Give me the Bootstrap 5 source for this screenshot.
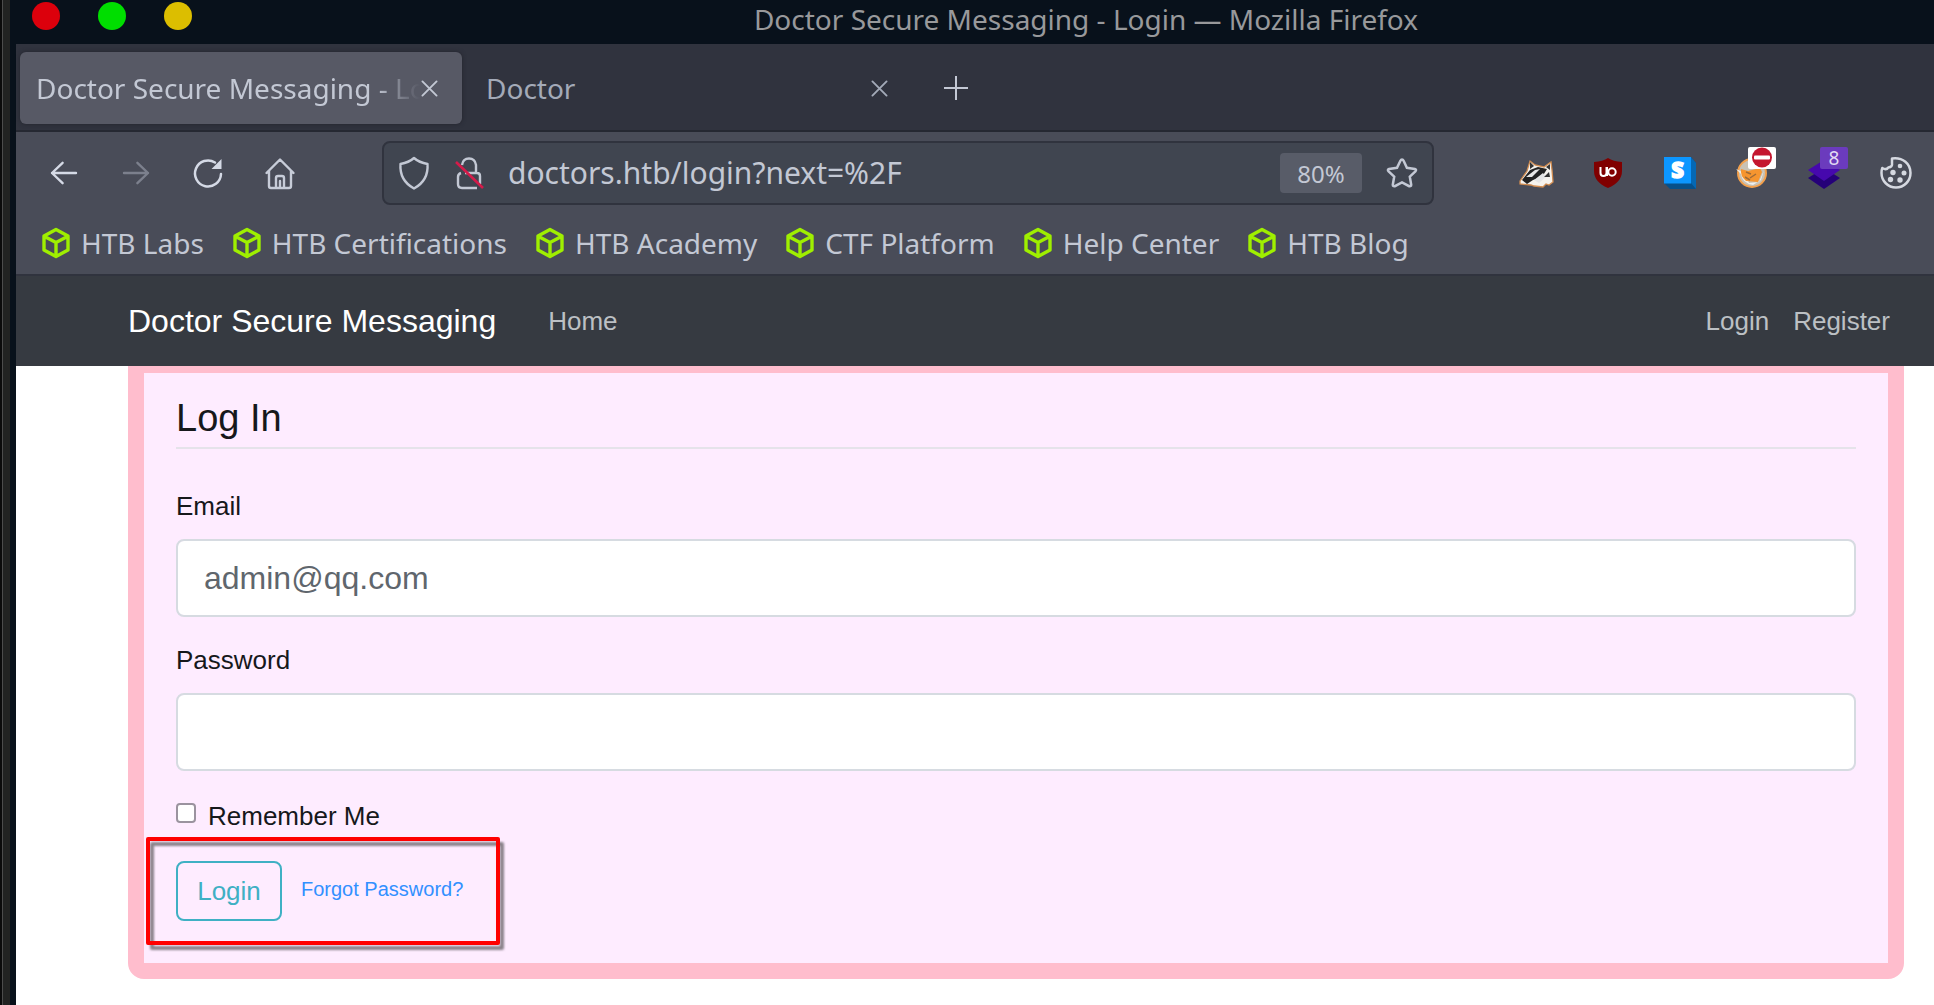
<!DOCTYPE html>
<html lang="en">
<head>
<meta charset="utf-8">
<meta name="viewport" content="width=device-width, initial-scale=1">
<title>Doctor Secure Messaging - Login</title>
<link rel="stylesheet" href="https://cdn.jsdelivr.net/npm/bootstrap@5.3.0/dist/css/bootstrap.min.css">
<style>
  body { font-family: "Liberation Sans", Arial, sans-serif; font-size: 26px; line-height: 38px; color: #16181b; background: #fff; overflow-x: hidden; }
  .desk-edge { width: 16px; flex: none; background: linear-gradient(90deg, #0b0b0b 2px, #4c4c4c 2px 3px, #222322 3px 10px, #08111b 10px); }
  .browser-ui { font-family: "Noto Sans", sans-serif; font-size: 28px; line-height: 38px; color: #c3c8d4; }
  .browser-ui svg { display: block; flex: none; overflow: visible; }
  .browser-ui button { background: none; border: 0; padding: 0; color: inherit; line-height: inherit; }
  .titlebar { height: 44px; background: #08111b; color: #98999b; padding-bottom: 6px; }
  .dots { gap: 38px; padding-left: 16px; margin-top: -6px; }
  .dots button { width: 28px; height: 28px; border-radius: 50%; }
  .dots .d-close { background: #dc000c; }
  .dots .d-min { background: #00de00; }
  .dots .d-max { background: #dcbe00; }
  .win-title { padding-left: 46px; }
  .tabstrip { height: 88px; background: #30333e; border-bottom: 2px solid #252832; padding: 2px 4px 0; }
  .web-tab { width: 442px; height: 72px; border-radius: 6px; padding: 0 24px 0 16px; color: #a3aab8; }
  .web-tab.current { background: #575965; color: #c3c8d4; box-shadow: 0 0 4px #22242d; }
  .web-tab .cap { flex: 1; min-width: 0; overflow: hidden; white-space: nowrap; }
  .web-tab.current .cap { -webkit-mask-image: linear-gradient(90deg, #000 340px, rgba(0,0,0,.35) 365px, transparent 384px); mask-image: linear-gradient(90deg, #000 340px, rgba(0,0,0,.35) 365px, transparent 384px); }
  .toolbar { background: #494c58; height: 82px; }
  .nav-icons { padding-left: 12px; width: 366px; flex: none; }
  .nav-icons button, .exts button { width: 72px; height: 72px; display: flex; align-items: center; justify-content: center; position: relative; }
  .urlbar { height: 64px; background: #404550; border: 2px solid #30333e; border-radius: 8px; padding: 0 14px; gap: 24px; }
  .urlbar input { flex: 1; min-width: 0; border: 0; outline: 0; background: none; color: inherit; padding: 0; margin: 0; font-size: 30px; }
  .zoom-pill { height: 40px; border-radius: 4px; width: 82px; font-size: 24px; }
  .urlbar button.zoom-pill { background: #585c68; padding-top: 2px; }
  .exts { padding-left: 66px; padding-right: 2px; }
  .ext-flag { position: absolute; left: 32px; top: 10px; }
  .bookmarks { background: #494c58; height: 62px; border-bottom: 2px solid #30333e; padding: 0 26px 2px; gap: 29px; }
  .bookmarks a { color: inherit; gap: 11px; white-space: nowrap; }
  .site-nav { background: #363a41; min-height: 90px; padding: 0 44px 0 112px; }
  .site-nav .navbar-brand { font-size: 32px; line-height: 38px; color: #fff; padding: 0; margin-right: 52px; }
  .site-nav .nav-link { color: #bcc0c4; padding: 0; }
  .site-nav .right-links { gap: 24px; }
  .page-body { padding: 0 30px 26px 112px; }
  .login-box { background: #feecff; border: 16px solid #ffbdcd; border-top-width: 7px; border-radius: 0 0 16px 16px; padding: 22px 32px 42px; }
  .login-box legend { font-size: 38px; line-height: 46px; padding-bottom: 6px; border-bottom: 2px solid #e5e3ea; margin-bottom: 38px; }
  .login-box .form-label { display: block; margin-bottom: 14px; }
  .field-row { margin-bottom: 24px; }
  .login-box .form-control { height: 78px; border: 2px solid #d6dbe1; border-radius: 8px; font-size: 32px; line-height: 48px; padding: 0 26px; color: #5f666d; }
  .remember { gap: 12px; margin: 26px 0; }
  .remember .form-check-input { width: 20px; height: 20px; margin: 0 0 6px; border: 2px solid #9b939f; border-radius: 4px; float: none; }
  .action-row { gap: 19px; }
  .btn-login { --bs-btn-color: #3fb0c4; --bs-btn-border-color: #3fb0c4; --bs-btn-hover-bg: #3fb0c4; --bs-btn-hover-color: #fff; font-size: 26px; line-height: 38px; border-width: 2px; border-radius: 8px; height: 60px; width: 106px; padding: 0; }
  .forgot { font-size: 20px; color: #3290ff; text-decoration: none; line-height: 56px; }
  .marker { position: absolute; inset: -24px -37px -24px -30px; border: 4px solid #f00; border-radius: 2px; pointer-events: none; filter: drop-shadow(4px 5px 1px rgba(60, 60, 60, .6)); }
</style>
<script src="https://cdn.jsdelivr.net/npm/bootstrap@5.3.0/dist/js/bootstrap.bundle.min.js"></script>
</head>
<body>
<svg width="0" height="0" class="position-absolute" aria-hidden="true">
  <symbol id="cube" viewBox="0 0 28 32"><path d="M14 2.500 26 9v14l-12 6.500L2 23V9zM2.500 9.500 14 15.500l11.500-6M14 15.500v13.500" fill="none" stroke="#9fef00" stroke-width="3.400" stroke-linejoin="round"/></symbol>
  <symbol id="cross" viewBox="0 0 18 18"><path d="M1.500 1.500l15 15M16.500 1.500l-15 15" fill="none" stroke="currentColor" stroke-width="2" stroke-linecap="round"/></symbol>
</svg>
<div class="d-flex min-vh-100">
  <div class="desk-edge"></div>
  <div class="flex-grow-1" style="min-width:0">
    <header class="browser-ui">
      <div class="titlebar d-flex align-items-center">
        <div class="dots d-flex">
          <button class="d-close" aria-label="Close window"></button>
          <button class="d-min" aria-label="Minimize"></button>
          <button class="d-max" aria-label="Maximize"></button>
        </div>
        <div class="win-title flex-grow-1 text-center">Doctor Secure Messaging - Login — Mozilla Firefox</div>
      </div>
      <div class="tabstrip d-flex align-items-center">
        <div class="web-tab current d-flex align-items-center">
          <span class="cap">Doctor Secure Messaging - Login</span>
          <button aria-label="Close tab"><svg width="17" height="17"><use href="#cross"/></svg></button>
        </div>
        <div class="web-tab d-flex align-items-center ms-2">
          <span class="cap">Doctor</span>
          <button aria-label="Close tab"><svg width="17" height="17"><use href="#cross"/></svg></button>
        </div>
        <button class="ms-4 ps-2" aria-label="New tab"><svg width="24" height="24" viewBox="0 0 24 24"><path d="M12 0v24M0 12h24" stroke="currentColor" stroke-width="2"/></svg></button>
      </div>
      <div class="toolbar d-flex align-items-center">
        <div class="nav-icons d-flex">
          <button aria-label="Back"><svg width="28" height="24" viewBox="0 0 30 26" fill="none" stroke="#d5dae6" stroke-width="2.600" stroke-linecap="round" stroke-linejoin="round"><path d="M28 13H2M13.500 2 2 13l11.500 11"/></svg></button>
          <button aria-label="Forward"><svg width="28" height="24" viewBox="0 0 30 26" fill="none" stroke="#7c808d" stroke-width="2.600" stroke-linecap="round" stroke-linejoin="round"><path d="M2 13h26M16.500 2 28 13 16.500 24"/></svg></button>
          <button aria-label="Reload"><svg width="30" height="30" viewBox="0 0 30 30"><path d="M28 16A13 13 0 1 1 22 4.500" fill="none" stroke="#d5dae6" stroke-width="2.500" stroke-linecap="round"/><path d="M28.500 1v10h-10z" fill="#d5dae6"/></svg></button>
          <button aria-label="Home"><svg width="30" height="31" viewBox="0 0 30 31" fill="none" stroke="#c7ccd8" stroke-width="2.400" stroke-linejoin="round" stroke-linecap="round"><path d="M1.500 15 15 1.500 28.500 15M4 13v15q0 2 2 2h18q2 0 2-2V13M11 30V20q0-2 2-2h4q2 0 2 2v10M15 23v6"/></svg></button>
        </div>
        <div class="urlbar d-flex align-items-center flex-grow-1">
          <svg width="32" height="34" viewBox="0 0 32 34"><path d="M16 2c4 3.500 8 5 13.500 6 .8 11-3.500 19-13.500 24.500C6 27 1.700 19 2.500 8 8 7 12 5.500 16 2z" fill="none" stroke="#c3c8d4" stroke-width="2.400" stroke-linejoin="round"/></svg>
          <svg width="30" height="32" viewBox="0 0 30 32"><path d="M8 8q1-6.500 7-6.500T22 8v8M11 16h12q3 0 3 3v8M7 16q-3 1-3 4v7q0 4 4 4h15" fill="none" stroke="#c3c8d4" stroke-width="2.400"/><path d="M2 5l27 26" stroke="#d51b4a" stroke-width="2.600"/></svg>
          <input type="text" aria-label="Address" value="doctors.htb/login?next=%2F">
          <button class="zoom-pill" aria-label="Reset zoom">80%</button>
          <svg width="32" height="32" viewBox="0 0 32 32"><path d="M16 2.500q1 0 1.600 1.300l3.300 7 8 1.200q2 .6.500 2.300l-5.600 5.400 1.400 8q0 2-2 1.500L16 25.500l-7.200 3.700q-2 .5-2-1.500l1.400-8-5.600-5.400Q1 12.600 3 12l8-1.200 3.400-7Q15 2.500 16 2.500z" fill="none" stroke="#c3c8d4" stroke-width="2.500"/></svg>
        </div>
        <div class="exts d-flex">
          <button aria-label="Privacy Badger"><svg width="34" height="28" viewBox="0 0 34 28"><path d="M1 22 8 12l3-10 5 4 9 2 7-5 1 8 1 12-4 3-3-1-3 3-9-1-3-1-11-1z" fill="#f6f3ee" stroke="#d18c50" stroke-width="1.300"/><path d="M3 21 11 11l8-3 9 2-5 8-9 3-6 4z" fill="#222"/><path d="M7 18l9-7 5-1-8 8zM15 21l9-7 3 4-7 6z" fill="#e6e6e6"/><path d="M11 3l4 4-4 3zM27 8l4-3v6zM25 18l5-5 1 5z" fill="#333"/></svg></button>
          <button aria-label="uBlock"><svg width="28" height="32" viewBox="0 0 28 32"><path d="M14 1q5 3.500 14 4v9q0 11-14 17Q0 25 0 14V5q9-.5 14-4z" fill="#800000"/><path d="M6.500 10v6q0 3 3 3t3-3v-6M13 10v9" fill="none" stroke="#fff" stroke-width="2"/><circle cx="18" cy="15" r="3.700" fill="none" stroke="#fff" stroke-width="2"/></svg></button>
          <button aria-label="Stylus"><svg width="32" height="32" viewBox="0 0 32 32"><path d="M0 26 6 32h26V6l-5-6z" fill="#07508a"/><path d="M27 0l5 6v26l-5-6z" fill="#0568b4"/><path d="M0 0h27v26.500H0z" fill="#0c96ff"/><text x="13.500" y="21" font-family="Open Sans, sans-serif" font-size="22" font-weight="800" fill="#fff" stroke="#fff" stroke-width="1.400" text-anchor="middle">S</text></svg></button>
          <button aria-label="FoxyProxy"><svg width="32" height="32" viewBox="0 0 32 32"><circle cx="16" cy="16" r="14" fill="#c9c2b5" stroke="#f3a04c" stroke-width="2"/><path d="M0 12l9 4 4 10 10-1 5-12-3 10-8 5q-11-2-12-11z" fill="#f0f0ed"/><path d="M5 12l7 2 12-3 2 4-4 10-12-1q-6-5-5-12z" fill="#f6952f"/><path d="M10 15l5 2M14 21l6-4M9 20l5 3" stroke="#9e6b38" stroke-width="1.500"/></svg>
            <svg class="ext-flag" width="28" height="22" viewBox="0 0 28 22"><rect width="28" height="22" rx="2" fill="#fff"/><circle cx="14" cy="10.500" r="10" fill="#c4162f"/><rect x="6" y="8.500" width="16" height="4" rx="1" fill="#fff"/></svg></button>
          <button aria-label="Wappalyzer, 8 found"><svg width="32" height="32" viewBox="0 0 32 32"><path d="M16 11 32 21 16 32 0 21z" fill="#250078"/><path d="M16 3 32 13 16 24 0 13z" fill="#4608ad"/></svg>
            <svg class="ext-flag" width="28" height="22" viewBox="0 0 28 22"><rect width="28" height="22" rx="2" fill="#6b3bbd"/><text x="14" y="18" font-family="Noto Sans, sans-serif" font-size="19" fill="#e2daf3" text-anchor="middle">8</text></svg></button>
          <button aria-label="Cookie editor"><svg width="32" height="32" viewBox="0 0 32 32"><path d="M12 1.500C23 0 30.500 7 30.500 16A14.500 14.500 0 0 1 1.500 16q0-3 .8-5 4 2.500 6-.5 4.500-.5 3.700-4.500z" fill="none" stroke="#d5d8e0" stroke-width="2.500" stroke-linejoin="round"/><g fill="#d5d8e0"><circle cx="20" cy="9" r="2.300"/><circle cx="13" cy="15.500" r="2.700"/><circle cx="24" cy="16" r="2.500"/><circle cx="10.500" cy="22.500" r="2.700"/><circle cx="20" cy="23" r="2.700"/></g></svg></button>
        </div>
      </div>
      <nav class="bookmarks d-flex align-items-center" aria-label="Bookmarks">
        <a href="#" class="d-flex align-items-center text-decoration-none"><svg width="28" height="32"><use href="#cube"/></svg>HTB Labs</a>
        <a href="#" class="d-flex align-items-center text-decoration-none"><svg width="28" height="32"><use href="#cube"/></svg>HTB Certifications</a>
        <a href="#" class="d-flex align-items-center text-decoration-none"><svg width="28" height="32"><use href="#cube"/></svg>HTB Academy</a>
        <a href="#" class="d-flex align-items-center text-decoration-none"><svg width="28" height="32"><use href="#cube"/></svg>CTF Platform</a>
        <a href="#" class="d-flex align-items-center text-decoration-none"><svg width="28" height="32"><use href="#cube"/></svg>Help Center</a>
        <a href="#" class="d-flex align-items-center text-decoration-none"><svg width="28" height="32"><use href="#cube"/></svg>HTB Blog</a>
      </nav>
    </header>
    <nav class="site-nav d-flex align-items-center">
      <a class="navbar-brand" href="#">Doctor Secure Messaging</a>
      <a class="nav-link" href="#">Home</a>
      <div class="right-links d-flex ms-auto">
        <a class="nav-link" href="#">Login</a>
        <a class="nav-link" href="#">Register</a>
      </div>
    </nav>
    <main class="page-body">
      <form class="login-box">
        <fieldset>
          <legend>Log In</legend>
          <div class="field-row">
            <label class="form-label" for="email">Email</label>
            <input class="form-control" id="email" type="email" value="admin@qq.com">
          </div>
          <div>
            <label class="form-label" for="password">Password</label>
            <input class="form-control" id="password" type="password">
          </div>
          <div class="remember d-flex align-items-center">
            <input class="form-check-input" id="remember" type="checkbox">
            <label for="remember">Remember Me</label>
          </div>
        </fieldset>
        <div class="action-row d-inline-flex position-relative align-top">
          <button class="btn btn-login" type="button">Login</button>
          <a class="forgot" href="#">Forgot Password?</a>
          <div class="marker"></div>
        </div>
      </form>
    </main>
  </div>
</div>
</body>
</html>
